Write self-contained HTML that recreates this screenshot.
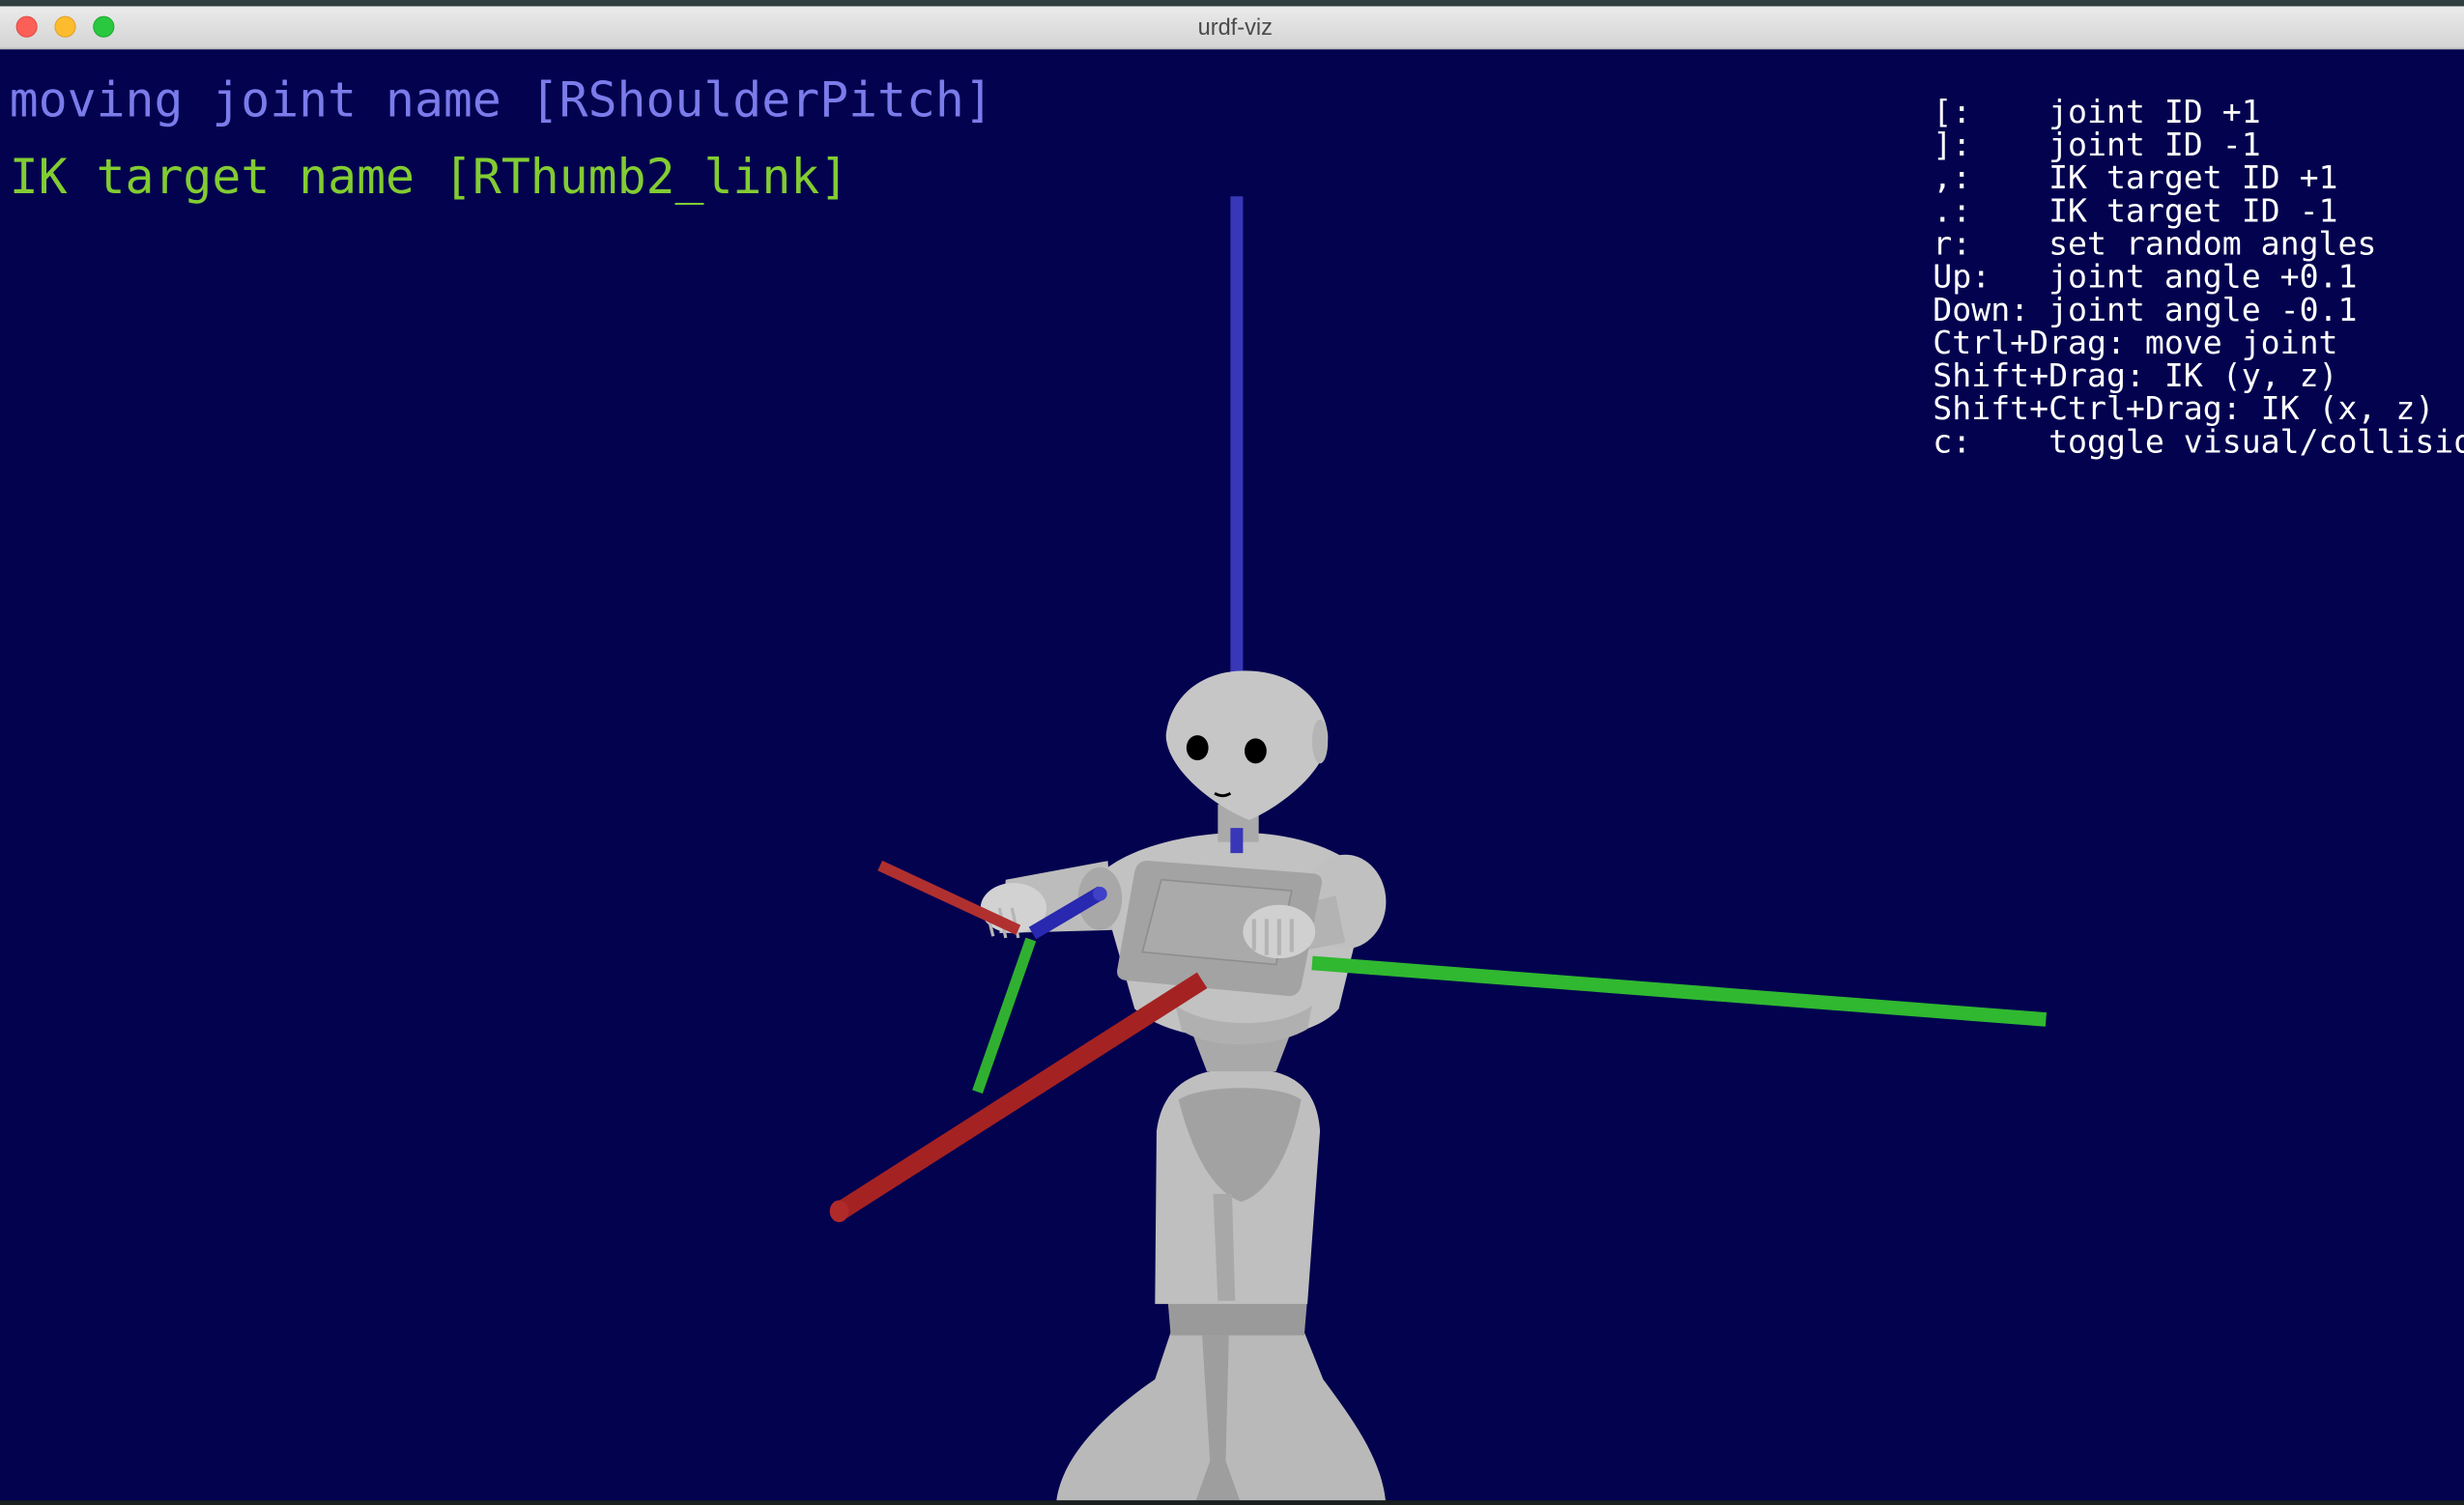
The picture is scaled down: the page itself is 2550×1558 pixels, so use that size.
<!DOCTYPE html>
<html><head><meta charset="utf-8"><style>
html,body{margin:0;padding:0;background:#02024f;overflow:hidden}
svg{display:block}
svg text{white-space:pre}
</style></head><body>
<svg width="2550" height="1558" viewBox="0 0 1568 958" preserveAspectRatio="none" xmlns="http://www.w3.org/2000/svg" xml:space="preserve">
<rect x="0" y="0" width="1568" height="958" fill="#02024f"/>
<rect x="0" y="0" width="1568" height="4" fill="#2f3f40"/>
<defs><linearGradient id="tb" x1="0" y1="0" x2="0" y2="1"><stop offset="0" stop-color="#ebebeb"/><stop offset="1" stop-color="#d3d3d3"/></linearGradient></defs>
<rect x="0" y="4" width="1568" height="27" fill="url(#tb)"/>
<rect x="0" y="30.5" width="1568" height="1" fill="#b5b5b5"/>
<circle cx="17" cy="17" r="6.5" fill="#fc5f57" stroke="#de4a42" stroke-width="0.6"/>
<circle cx="41.5" cy="17" r="6.5" fill="#fdbc2e" stroke="#dea023" stroke-width="0.6"/>
<circle cx="66" cy="17" r="6.5" fill="#29c83f" stroke="#1ea72f" stroke-width="0.6"/>
<text x="786" y="22" text-anchor="middle" font-family="Liberation Sans, sans-serif" font-size="14.5" fill="#4a4a4a">urdf-viz</text>

<g font-family="DejaVu Sans Mono, Liberation Mono, monospace">
<text x="6" y="74" font-size="30.6" fill="#7b7bea" textLength="626" lengthAdjust="spacingAndGlyphs">moving joint name [RShoulderPitch]</text>
<text x="6" y="123" font-size="30.6" fill="#82cc32" textLength="534" lengthAdjust="spacingAndGlyphs">IK target name [RThumb2_link]</text>
<g font-size="20.4" fill="#ffffff">
<text x="1230" y="78">[:    joint ID +1</text>
<text x="1230" y="99">]:    joint ID -1</text>
<text x="1230" y="120">,:    IK target ID +1</text>
<text x="1230" y="141">.:    IK target ID -1</text>
<text x="1230" y="162">r:    set random angles</text>
<text x="1230" y="183">Up:   joint angle +0.1</text>
<text x="1230" y="204">Down: joint angle -0.1</text>
<text x="1230" y="225">Ctrl+Drag: move joint</text>
<text x="1230" y="246">Shift+Drag: IK (y, z)</text>
<text x="1230" y="267">Shift+Ctrl+Drag: IK (x, z)</text>
<text x="1230" y="288">c:    toggle visual/collision</text>
</g></g>

<line x1="787" y1="125" x2="787" y2="432" stroke="#3737b8" stroke-width="8"/>

<path d="M672,958 C674,930 700,902 735,878 L745,848 L830,848 L842,878 C862,905 880,930 882,958 Z" fill="#b9b9b9"/>
<path d="M765,850 L770,930 L760,958 L790,958 L780,930 L782,850 Z" fill="#9e9e9e"/>
<path d="M743,826 L832,826 L830,850 L745,850 Z" fill="#9a9a9a"/>
<path d="M735,830 L736,720 C740,690 760,680 790,680 C820,680 838,690 840,720 L832,830 Z" fill="#bfbfbf"/>
<path d="M750,700 C760,740 775,760 790,765 C805,760 820,740 828,700 C815,690 765,690 750,700 Z" fill="#a2a2a2"/>
<path d="M772,760 L775,828 L786,828 L784,760 Z" fill="#a8a8a8"/>
<path d="M752,640 L768,682 L812,682 L828,640 Z" fill="#a9a9a9"/>
<path d="M698,558 C718,538 760,530 790,530 C822,530 856,540 872,560 L852,642 C830,668 750,668 722,642 Z" fill="#c2c2c2"/>
<path d="M748,640 C770,655 815,655 835,640 L832,655 C810,668 770,668 752,656 Z" fill="#b0b0b0"/>
<rect x="775" y="512" width="26" height="24" fill="#aaaaaa"/>
<path d="M705,548 L640,560 L636,594 L708,592 Z" fill="#bcbcbc"/>
<ellipse cx="700" cy="572" rx="14" ry="20" fill="#a8a8a8"/>
<ellipse cx="645" cy="578" rx="21" ry="16" fill="#d2d2d2"/>
<path d="M628,580 L632,596 M636,578 L640,597 M644,578 L648,597" stroke="#b5b5b5" stroke-width="2"/>
<ellipse cx="856" cy="574" rx="26" ry="30" fill="#c0c0c0"/>
<path d="M820,578 L850,570 L856,600 L825,606 Z" fill="#b3b3b3"/>
<path d="M732,548 L836,556 Q842,557 841,563 L828,628 Q826,634 820,634 L716,624 Q710,623 711,617 L722,555 Q724,547 732,548 Z" fill="#a3a3a3"/>
<path d="M739,560 L822,567 L812,614 L727,606 Z" fill="#aaaaaa" stroke="#8e8e8e" stroke-width="1"/>
<ellipse cx="814" cy="593" rx="23" ry="17" fill="#d0d0d0"/>
<path d="M798,585 L798,605 M806,585 L806,608 M814,585 L814,608 M822,585 L822,606" stroke="#b3b3b3" stroke-width="2.5"/>
<path d="M792,427 C826,427 843,448 845,468 C846,488 818,512 795,522 C770,512 742,488 742,468 C744,446 762,427 792,427 Z" fill="#c6c6c6"/>
<ellipse cx="840" cy="472" rx="5" ry="14" fill="#b5b5b5"/>
<ellipse cx="762" cy="476" rx="7" ry="8" fill="#000"/>
<ellipse cx="799" cy="478" rx="7" ry="8" fill="#000"/>
<path d="M773,505 Q778,508 783,505" stroke="#000" stroke-width="1.8" fill="none"/>
<line x1="787" y1="527" x2="787" y2="543" stroke="#3737b8" stroke-width="8"/>

<line x1="835" y1="613" x2="1302" y2="649" stroke="#30b830" stroke-width="9"/>
<line x1="765" y1="624" x2="533" y2="772" stroke="#a52222" stroke-width="12"/>
<ellipse cx="534" cy="771" rx="6" ry="7" fill="#b02a2a"/>
<line x1="560" y1="551" x2="648" y2="592" stroke="#b03030" stroke-width="7"/>
<line x1="656" y1="598" x2="622" y2="695" stroke="#30b030" stroke-width="7"/>
<line x1="657" y1="594" x2="701" y2="568" stroke="#2828b0" stroke-width="9"/>
<circle cx="700" cy="569" r="4.5" fill="#4040c8"/>
<rect x="0" y="955" width="1568" height="3" fill="#1a1f1f"/>
</svg>
</body></html>
